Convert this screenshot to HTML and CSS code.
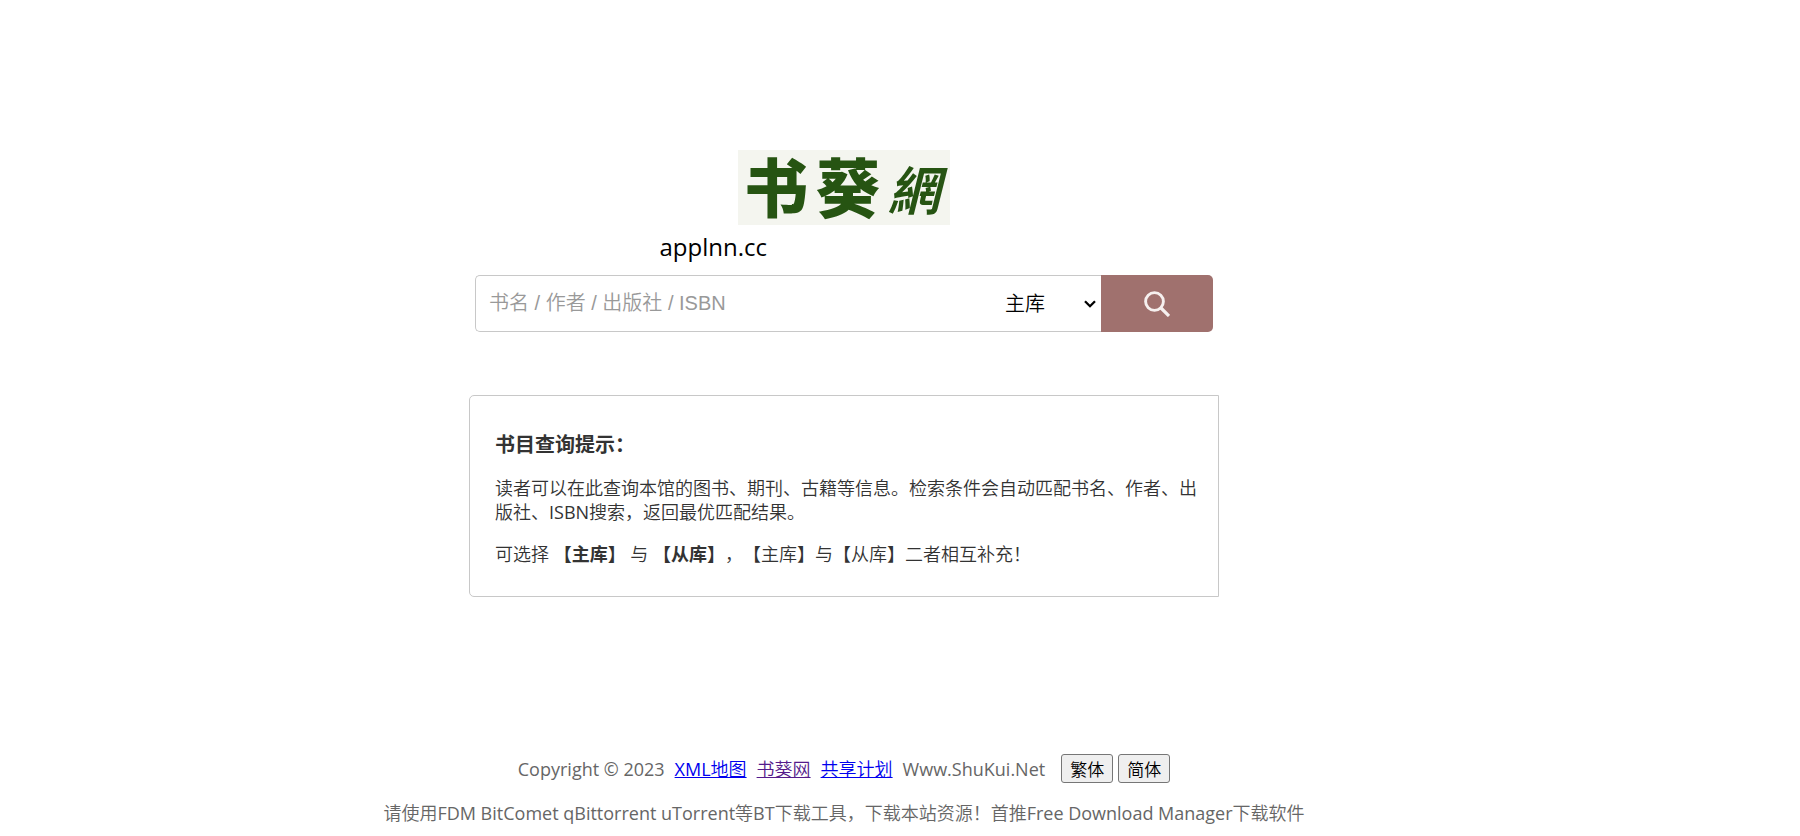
FILE: index.html
```html
<!DOCTYPE html>
<html lang="zh-CN">
<head>
  <meta charset="UTF-8">
  <meta name="viewport" content="width=device-width, initial-scale=1.0">
  <title>书葵网</title>
  <link rel="stylesheet" href="styles.css">
</head>
<body>

  <main class="main">
    <h1 class="logo" lang="zh-CN">
      <span>书</span><span>葵</span><span class="logo-small" lang="zh-TW">網</span>
    </h1>

    <form class="search" action="#" method="get">
      <p class="domain">applnn.cc</p>
      <div class="search-bar">
        <input class="search-input" type="text" name="q" aria-label="书名 / 作者 / 出版社 / ISBN" placeholder="书名 / 作者 / 出版社 / ISBN">
        <div class="select-wrap">
          <select class="search-select" name="db" aria-label="选择书库">
            <option value="1">主库</option>
            <option value="2">从库</option>
          </select>
          <svg class="arrow" width="12" height="8" viewBox="0 0 12 8" aria-hidden="true">
            <path d="M1 1.2 L6 6.2 L11 1.2" fill="none" stroke="#000" stroke-width="2.3"/>
          </svg>
        </div>
        <button class="search-btn" type="submit" aria-label="搜索">
          <svg width="26" height="26" viewBox="0 0 26 26" aria-hidden="true">
            <circle cx="10.5" cy="10.5" r="8.9" fill="none" stroke="#f6f0ef" stroke-width="2.9"/>
            <path d="M17 17 L25 25" stroke="#f6f0ef" stroke-width="3.2"/>
          </svg>
        </button>
      </div>
    </form>

    <section class="tips">
      <h2>书目查询提示：</h2>
      <p>读者可以在此查询本馆的图书、期刊、古籍等信息。检索条件会自动匹配书名、作者、出版社、ISBN搜索，返回最优匹配结果。</p>
      <p>可选择 <b>【主库】</b> 与 <b>【从库】</b>，【主库】与【从库】二者相互补充！</p>
    </section>
  </main>

  <footer class="footer">
    <p class="footer-row">
      <span>Copyright © 2023</span>
      <a href="#">XML地图</a>
      <a class="visited" href="#">书葵网</a>
      <a href="#">共享计划</a>
      <span>Www.ShuKui.Net</span>
      <span class="lang-btns">
        <button type="button">繁体</button>
        <button type="button">简体</button>
      </span>
    </p>
    <p>请使用FDM BitComet qBittorrent uTorrent等BT下载工具，下载本站资源！首推Free Download Manager下载软件</p>
  </footer>

</body>
</html>
```
FILE: styles.css
```css
* {
  box-sizing: border-box;
}

body {
  margin: 0;
  padding: 150px 112px 0 0;
  font-family: "Open Sans", "Noto Sans CJK SC DemiLight", "Noto Sans CJK SC Light", "Noto Sans CJK SC", sans-serif;
  font-size: 18px;
  line-height: 24px;
  color: #333;
  background: #fff;
}

.main {
  display: flex;
  flex-direction: column;
  align-items: center;
}

/* logo */
.logo {
  display: flex;
  align-items: center;
  justify-content: center;
  gap: 8px;
  height: 75px;
  margin: 0;
  padding: 0 10px 6px 6px;
  font-family: "Noto Sans CJK SC", sans-serif;
  font-size: 64px;
  font-weight: 900;
  line-height: 69px;
  color: #265412;
  background: #f4f5ef;
}

.logo-small {
  padding-top: 6px;
  font-family: "Noto Sans CJK TC", sans-serif;
  font-size: 52px;
  font-style: italic;
  font-weight: 700;
}

/* search */
.search {
  width: 100%;
  max-width: 738px;
}

.domain {
  margin: 0;
  padding: 6px 0 12px 25%;
  font-size: 24px;
  line-height: 32px;
  color: #000;
}

.search-bar {
  display: flex;
  height: 57px;
}

.search-input,
.search-select {
  height: 100%;
  border: 1px solid #c8c8c8;
  background: #fff;
  font-family: "Liberation Sans", "Noto Sans CJK SC DemiLight", "Noto Sans CJK SC Light", "Noto Sans CJK SC", sans-serif;
  font-size: 20px;
  outline: none;
}

.search-input {
  flex: 1;
  min-width: 0;
  padding: 0 13px;
  border-right: 0;
  border-radius: 5px 0 0 5px;
}

.search-input::placeholder {
  color: #999;
}

.select-wrap {
  position: relative;
  width: 96px;
}

.search-select {
  width: 100%;
  padding: 0;
  border-width: 1px 0;
  color: #000;
  appearance: none;
}

.arrow {
  position: absolute;
  top: 25px;
  right: 5px;
  pointer-events: none;
}

.search-btn {
  display: flex;
  align-items: center;
  justify-content: center;
  width: 112px;
  padding: 0;
  border: 0;
  border-radius: 0 5px 5px 0;
  background: #a0716e;
  cursor: pointer;
}

/* tips */
.tips {
  width: 100%;
  max-width: 750px;
  margin-top: 63px;
  padding: 34px 20px 30px 25px;
  border: 1px solid #c8c8c8;
  border-radius: 5px 0 0 5px;
  text-spacing-trim: space-all;
}

.tips h2,
.tips b {
  font-family: "Noto Sans CJK SC", sans-serif;
  font-weight: 700;
}

.tips h2 {
  margin: 0 0 18px;
  font-size: 20px;
  line-height: 28px;
}

.tips p {
  margin: 0 0 17px;
}

.tips p:last-child {
  margin-bottom: 0;
}

/* footer */
.footer {
  margin-top: 157px;
  text-align: center;
  color: #666;
}

.footer p {
  margin: 0;
}

.footer .footer-row {
  display: flex;
  align-items: center;
  justify-content: center;
  gap: 10px;
  margin-bottom: 18px;
}

.footer a {
  color: #0000ee;
}

.footer a.visited {
  color: #551a8b;
}

.lang-btns {
  display: flex;
  gap: 5px;
  margin-left: 6px;
}

.lang-btns button {
  height: 29px;
  padding: 0 8px;
  border: 1px solid #767676;
  border-radius: 3px;
  background: #efefef;
  font-family: inherit;
  font-size: 17px;
  color: #000;
}
```
